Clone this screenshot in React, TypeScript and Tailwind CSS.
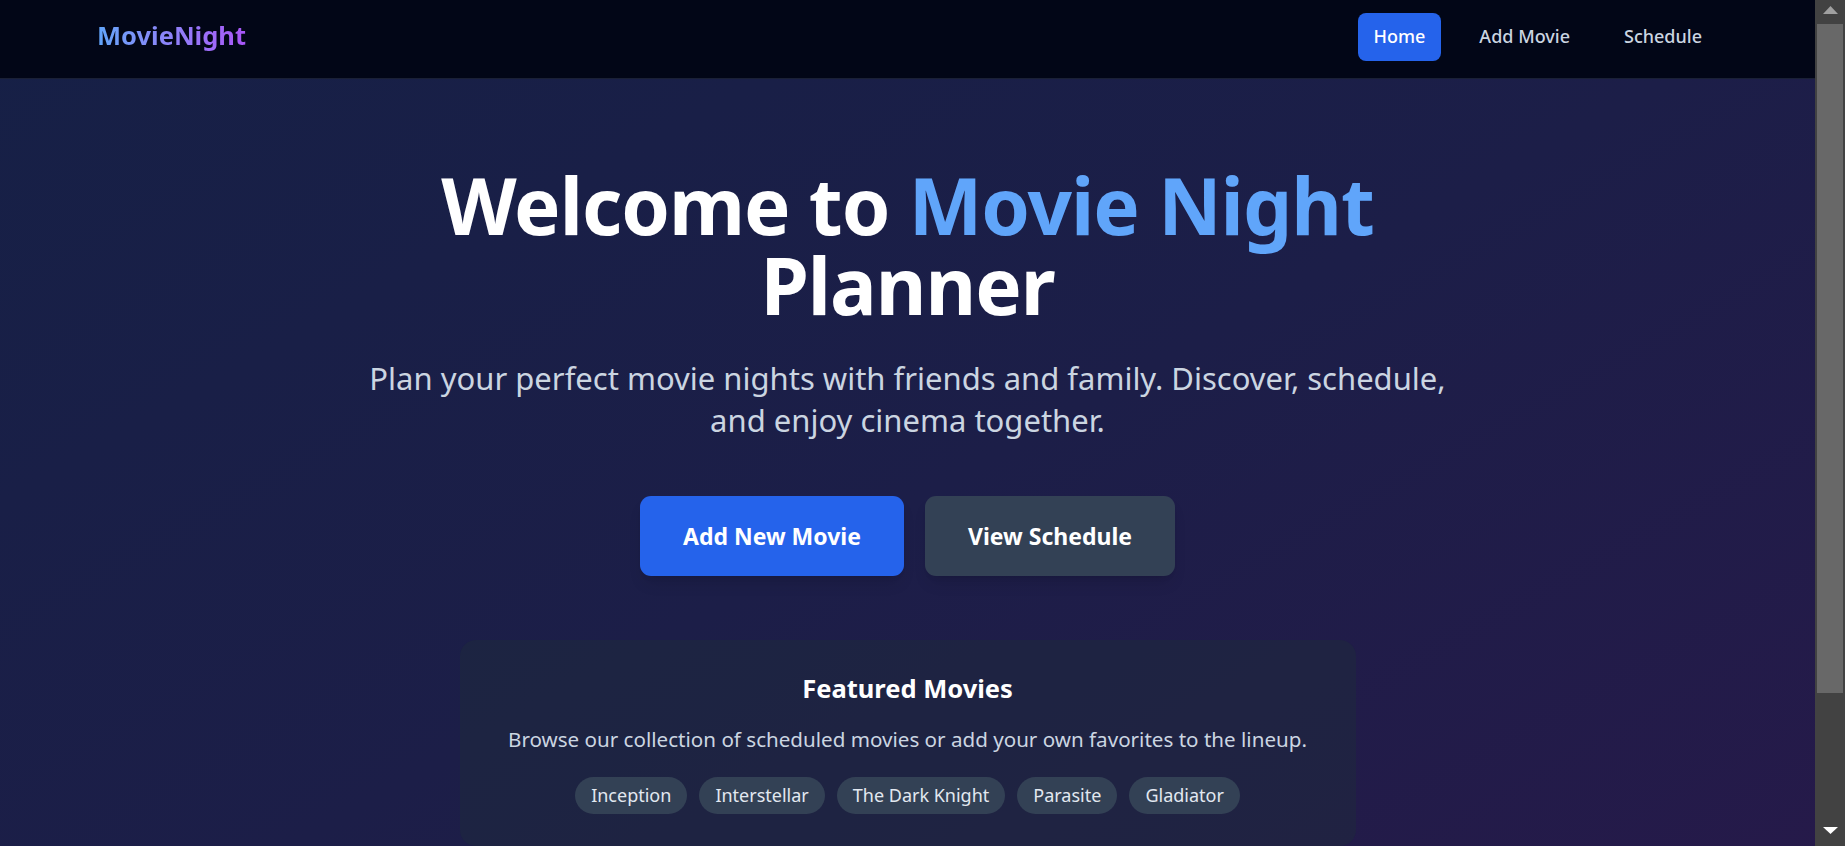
import React from "react";

const movies = ["Inception", "Interstellar", "The Dark Knight", "Parasite", "Gladiator"];

function Scrollbar() {
  return (
    <div className="flex h-full w-[30px] shrink-0 flex-col bg-[#424242]">
      <div className="flex h-[24px] shrink-0 justify-center pt-[6px] pl-[1px]">
        <svg width="15" height="8" viewBox="0 0 15 8">
          <polygon points="0,8 7.5,0 15,8" fill="#a0a0a0" />
        </svg>
      </div>
      <div className="mx-[2px] h-[669px] shrink-0 bg-[#686868]" />
      <div className="flex-1" />
      <div className="flex h-[24px] shrink-0 justify-center pt-[5px] pl-[1px]">
        <svg width="15" height="8" viewBox="0 0 15 8">
          <polygon points="0,0 15,0 7.5,7" fill="#ffffff" />
        </svg>
      </div>
    </div>
  );
}

export default function App() {
  return (
    <div className="flex h-screen overflow-hidden font-['Noto_Sans',sans-serif]">
      <div className="h-full min-w-0 flex-1 overflow-hidden">
        <div className="bg-[linear-gradient(to_bottom_right,#162046,#1c1e48_50%,#27194a)]">
          <nav className="flex h-[79px] items-center justify-between border-b border-[#1a2036] bg-[#020617] px-[97px] pb-[4px]">
            <div className="mb-[4px] bg-linear-to-r from-[#60a5fa] to-[#a855f7] bg-clip-text text-[25.5px] leading-8 font-bold text-transparent">
              MovieNight
            </div>
            <div className="flex items-center gap-[22px]">
              <a className="rounded-lg bg-[#2563eb] px-4 pt-[9px] pb-[11px] text-[18px] leading-7 font-medium text-white">Home</a>
              <a className="rounded-lg px-4 pt-[9px] pb-[11px] text-[18px] leading-7 font-medium text-[#cbd5e1]">Add Movie</a>
              <a className="rounded-lg px-4 pt-[9px] pb-[11px] text-[18px] leading-7 font-medium text-[#cbd5e1]">Schedule</a>
            </div>
          </nav>

          <main className="flex flex-col items-center px-6 pt-[86px] pb-[163px] text-center">
            <h1 className="max-w-5xl text-[78px] leading-[80px] font-bold tracking-[-1px] text-white">
              Welcome to <span className="text-[#60a5fa]">Movie Night</span> Planner
            </h1>
            <p className="mt-8 max-w-[1100px] text-[31px] leading-[42px] text-[#cbd5e1]">
              Plan your perfect movie nights with friends and family. Discover, schedule, and enjoy cinema together.
            </p>
            <div className="mt-[55px] flex gap-[21px]">
              <button className="flex h-[80px] items-center rounded-[11px] bg-[#2563eb] px-[43px] text-[23px] font-bold text-white shadow-lg">
                Add New Movie
              </button>
              <button className="flex h-[80px] items-center rounded-[11px] bg-[#334155] px-[43px] text-[23px] font-bold text-white shadow-lg">
                View Schedule
              </button>
            </div>

            <section className="mt-16 w-full max-w-[896px] rounded-2xl bg-[#1e293b]/50 p-8">
              <h2 className="text-[25.5px] leading-8 font-bold text-white">Featured Movies</h2>
              <p className="mt-[21px] text-[20.6px] leading-7 text-[#cbd5e1]">
                Browse our collection of scheduled movies or add your own favorites to the lineup.
              </p>
              <div className="mt-6 flex flex-wrap justify-center gap-3">
                {movies.map((m) => (
                  <span key={m} className="rounded-full bg-[#334155] px-4 py-1.5 text-[18px] leading-[25px] text-[#e2e8f0]">
                    {m}
                  </span>
                ))}
              </div>
            </section>
          </main>
        </div>
      </div>
      <Scrollbar />
    </div>
  );
}
